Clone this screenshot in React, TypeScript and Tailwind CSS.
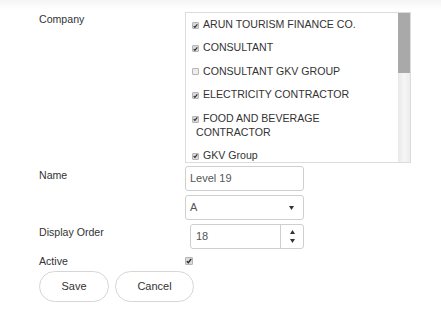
import React from 'react';

const companies = [
  { name: 'ARUN TOURISM FINANCE CO.', checked: true },
  { name: 'CONSULTANT', checked: true },
  { name: 'CONSULTANT GKV GROUP', checked: false },
  { name: 'ELECTRICITY CONTRACTOR', checked: true },
  { name: 'FOOD AND BEVERAGE CONTRACTOR', checked: true },
  { name: 'GKV Group', checked: true },
];

const Check = ({ checked, className = '' }: { checked: boolean; className?: string }) => (
  <span
    className={`inline-flex h-[7px] w-[7px] items-center justify-center rounded-[1px] border border-[#b5b5b5] align-[-0.5px] ${
      checked ? 'bg-[#d9d9d9]' : 'bg-[#ededed]'
    } ${className}`}
  >
    {checked && (
      <svg width="6" height="6" viewBox="0 0 6 6" fill="none" stroke="#2b2b2b" strokeWidth="1.3">
        <path d="M0.8 3.2 L2.3 4.7 L5.2 1" />
      </svg>
    )}
  </span>
);

export default function App() {
  return (
    <div className="min-h-[323px] bg-white font-['Liberation_Sans',Arial,sans-serif] text-[10.6px] text-[#333]">
      <div className="h-[10px] bg-gradient-to-b from-[#f4f4f4] to-white" />

      <div className="flex flex-col pl-[39px] pt-[2px]">
        {/* Company */}
        <div className="flex">
          <div className="w-[146px] pt-[1px] leading-[13px]">Company</div>
          <div className="flex h-[151px] w-[226px] border border-[#dcdcdc]">
            <div className="flex-1 overflow-hidden pl-[10px] pr-[8px] pt-[4px] leading-[14px]">
              <div className="flex w-[178px] flex-col gap-[9.4px]">
                {companies.map((c) => (
                  <div key={c.name}>
                    <Check checked={c.checked} className="-ml-[4px] mr-[4px]" />
                    {c.name}
                  </div>
                ))}
              </div>
            </div>
            <div className="flex w-[12px] flex-col bg-gradient-to-r from-[#e8e8e8] via-[#f6f6f6] to-[#ececec]">
              <div className="h-[60px] bg-[#a9a9a9]" />
            </div>
          </div>
        </div>

        {/* Name */}
        <div className="mt-[3px] flex">
          <div className="w-[146px] pt-[2px] leading-[14px]">Name</div>
          <div className="flex h-[25px] w-[119px] items-center rounded-[3px] border border-[#cfcfcf] pl-[4px] text-[11px] text-[#555]">
            Level 19
          </div>
        </div>

        <div className="mt-[4px] flex">
          <div className="w-[146px]" />
          <div className="flex h-[25px] w-[119px] items-center justify-between rounded-[3px] border border-[#cfcfcf] pl-[4px] pr-[9px] text-[11px] text-[#555]">
            <span>A</span>
            <svg width="5" height="4" viewBox="0 0 5 4">
              <path d="M0 0 L5 0 L2.5 4 Z" fill="#333" />
            </svg>
          </div>
        </div>

        {/* Display Order */}
        <div className="mt-[4px] flex">
          <div className="w-[146px] pt-[1px] leading-[14px]">Display Order</div>
          <div className="ml-[5px] flex h-[25px] w-[114px] rounded-[3px] border border-[#cfcfcf] text-[11px] text-[#555]">
            <div className="flex flex-1 items-center pl-[5px]">18</div>
            <div className="flex w-[23px] flex-col items-center justify-center gap-[5px] border-l border-[#cfcfcf]">
              <svg width="5" height="4" viewBox="0 0 5 4">
                <path d="M0 4 L5 4 L2.5 0 Z" fill="#333" />
              </svg>
              <svg width="5" height="4" viewBox="0 0 5 4">
                <path d="M0 0 L5 0 L2.5 4 Z" fill="#333" />
              </svg>
            </div>
          </div>
        </div>

        {/* Active */}
        <div className="mt-[5px] flex items-center">
          <div className="w-[146px] leading-[14px]">Active</div>
          <Check checked className="h-[8px] w-[8px]" />
        </div>

        <div className="mt-[3px] flex gap-[6px]">
          <button className="h-[31px] w-[70px] rounded-full border border-[#d6d6d6] bg-white text-[11px] text-[#333]">
            Save
          </button>
          <button className="h-[31px] w-[79px] rounded-full border border-[#d6d6d6] bg-white text-[11px] text-[#333]">
            Cancel
          </button>
        </div>
      </div>
    </div>
  );
}
